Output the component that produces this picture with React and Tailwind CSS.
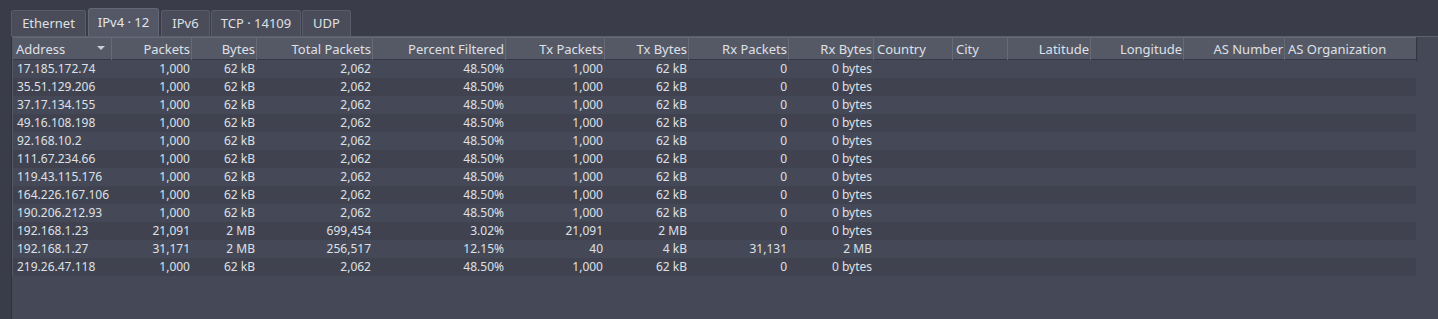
const tabs = [
	{ label: 'Ethernet', w: 'w-[75px]', active: false },
	{ label: 'IPv4 · 12', w: 'w-[71px]', active: true },
	{ label: 'IPv6', w: 'w-[49px]', active: false },
	{ label: 'TCP · 14109', w: 'w-[90px]', active: false },
	{ label: 'UDP', w: 'w-[49px]', active: false },
]

const columns = [
	{ name: 'Address', align: 'left', sort: true },
	{ name: 'Packets', align: 'right' },
	{ name: 'Bytes', align: 'right' },
	{ name: 'Total Packets', align: 'right' },
	{ name: 'Percent Filtered', align: 'right' },
	{ name: 'Tx Packets', align: 'right' },
	{ name: 'Tx Bytes', align: 'right' },
	{ name: 'Rx Packets', align: 'right' },
	{ name: 'Rx Bytes', align: 'right' },
	{ name: 'Country', align: 'left' },
	{ name: 'City', align: 'left' },
	{ name: 'Latitude', align: 'right' },
	{ name: 'Longitude', align: 'right' },
	{ name: 'AS Number', align: 'right' },
	{ name: 'AS Organization', align: 'left' },
]

const rows = [
	['17.185.172.74', '1,000', '62 kB', '2,062', '48.50%', '1,000', '62 kB', '0', '0 bytes'],
	['35.51.129.206', '1,000', '62 kB', '2,062', '48.50%', '1,000', '62 kB', '0', '0 bytes'],
	['37.17.134.155', '1,000', '62 kB', '2,062', '48.50%', '1,000', '62 kB', '0', '0 bytes'],
	['49.16.108.198', '1,000', '62 kB', '2,062', '48.50%', '1,000', '62 kB', '0', '0 bytes'],
	['92.168.10.2', '1,000', '62 kB', '2,062', '48.50%', '1,000', '62 kB', '0', '0 bytes'],
	['111.67.234.66', '1,000', '62 kB', '2,062', '48.50%', '1,000', '62 kB', '0', '0 bytes'],
	['119.43.115.176', '1,000', '62 kB', '2,062', '48.50%', '1,000', '62 kB', '0', '0 bytes'],
	['164.226.167.106', '1,000', '62 kB', '2,062', '48.50%', '1,000', '62 kB', '0', '0 bytes'],
	['190.206.212.93', '1,000', '62 kB', '2,062', '48.50%', '1,000', '62 kB', '0', '0 bytes'],
	['192.168.1.23', '21,091', '2 MB', '699,454', '3.02%', '21,091', '2 MB', '0', '0 bytes'],
	['192.168.1.27', '31,171', '2 MB', '256,517', '12.15%', '40', '4 kB', '31,131', '2 MB'],
	['219.26.47.118', '1,000', '62 kB', '2,062', '48.50%', '1,000', '62 kB', '0', '0 bytes'],
]

const gridCols = 'grid grid-cols-[99px_80px_65px_116px_133px_99px_84px_100px_85px_79px_55px_83px_93px_101px_132px]'

const App = () => {
	return (
		<div className="w-[1438px] h-[319px] flex flex-col bg-[#3a3d49] text-[12px] text-[#dfe0e6] font-['Noto_Sans',sans-serif] overflow-hidden">
			{/* tab bar */}
			<div className="flex flex-row items-end h-[36px] pl-[11px] gap-[1px] text-[13px]">
				{tabs.map((tab) => (
					<div
						key={tab.label}
						className={
							tab.active
								? `${tab.w} h-[28px] mx-[1px] flex items-center justify-center rounded-t-[3px] border border-b-0 border-[#646774] bg-[#545866] text-[#e6e7ec]`
								: `${tab.w} h-[26px] flex items-center justify-center rounded-t-[3px] border border-b-0 border-[#5a5d69] bg-[#4a4d59]`
						}
					>
						{tab.label}
					</div>
				))}
			</div>

			{/* panel */}
			<div className="flex-1 flex flex-col ml-[11px] border-t border-l border-t-[#5d606c] border-l-[#2f323c] bg-[#454957]">
				<div className="w-[1404px] border-l border-[#555866]">
					{/* header */}
					<div className={`${gridCols} h-[23px] text-[13px] bg-[#555966] border-t border-[#656875] border-b border-b-[#363945] shadow-[1px_1px_1px_rgba(0,0,0,0.25)]`}>
						{columns.map((col, i) => (
							<div
								key={col.name}
								className={`relative flex items-center h-full pt-[2px] ${col.align === 'right' ? 'justify-end pr-[1px]' : 'pl-[3px]'} ${i < columns.length - 1 ? 'border-r border-[#666a76]' : ''}`}
							>
								<span className="whitespace-nowrap">{col.name}</span>
								{col.sort && (
									<svg className="absolute right-[6px] top-[8px]" width="8" height="5" viewBox="0 0 8 5">
										<path d="M0 0 L8 0 L4 4 Z" fill="#c9cbd2" />
									</svg>
								)}
							</div>
						))}
					</div>

					{/* rows */}
					{rows.map((row, r) => (
						<div key={row[0]} className={`${gridCols} h-[18px] ${r % 2 === 1 ? 'bg-[#40434f]' : 'bg-[#454957]'}`}>
							{columns.map((col, i) => (
								<div
									key={col.name}
									className={`flex items-center h-full whitespace-nowrap ${col.align === 'right' ? 'justify-end pr-[2px]' : 'pl-[4px]'}`}
								>
									{row[i] ?? ''}
								</div>
							))}
						</div>
					))}
				</div>
			</div>
		</div>
	)
}

export default App
